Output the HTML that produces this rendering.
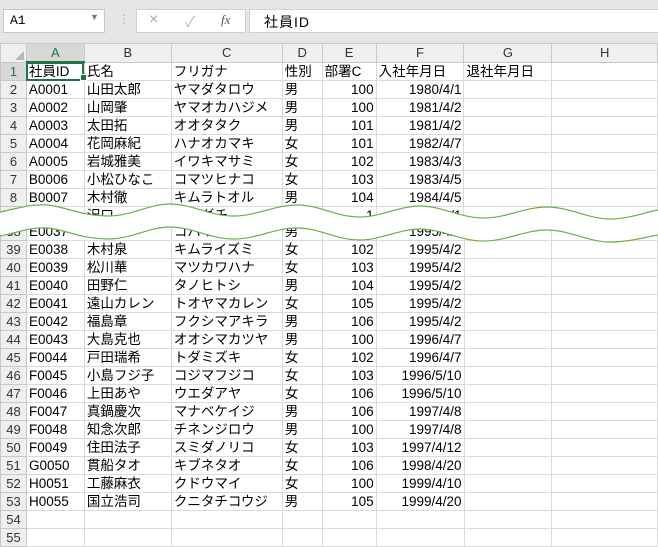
<html><head><style>
body{margin:0;width:658px;height:547px;overflow:hidden;background:#fff;position:relative;font-family:"Liberation Sans","Noto Sans CJK JP",sans-serif;}
.tb{position:absolute;left:0;top:0;width:658px;height:44px;background:#e6e6e6;}
.box{position:absolute;background:#fff;border:1px solid #c6c6c6;}
table{position:absolute;left:0;border-collapse:collapse;table-layout:fixed;font-size:13.5px;}
td{height:17px;padding:0 2px;border:1px solid #dadada;white-space:nowrap;overflow:hidden;line-height:17px;color:#000;}
td.h{background:#efefef;color:#333;text-align:center;border-color:#c8c8c8;font-size:13px;}
td.r{text-align:right;}
</style></head><body>
<div class="tb">
<div class="box" style="left:3px;top:9px;width:100px;height:22px"><span style="position:absolute;left:6px;top:3px;font-size:13px;font-family:'Liberation Mono',monospace">A1</span><span style="position:absolute;left:86px;top:2px;font-size:9px;color:#777">▼</span></div>
<span style="position:absolute;left:118px;top:12px;color:#aaa;font-size:12px">⋮</span>
<div class="box" style="left:136px;top:9px;width:108px;height:22px;border-color:#d0d0d0"><span style="position:absolute;left:12px;top:1px;color:#aaa;font-size:16px">×</span><span style="position:absolute;left:48px;top:1px;color:#bbb;font-size:15px">✓</span><span style="position:absolute;left:84px;top:2px;color:#555;font-size:13px;font-style:italic;font-family:'Liberation Serif',serif">fx</span></div>
<div class="box" style="left:249px;top:9px;width:420px;height:22px;border-color:#d0d0d0"><span style="position:absolute;left:14px;top:2px;font-size:14px;letter-spacing:1px">社員ID</span></div>
</div>
<table style="top:43px"><colgroup><col width="26"><col width="58"><col width="87"><col width="111"><col width="40"><col width="54"><col width="88"><col width="88"><col width="106"></colgroup>
<tr><td class="h" style="position:relative"><span style="position:absolute;right:2px;bottom:2px;width:0;height:0;border-left:9px solid transparent;border-bottom:9px solid #b8b8b8"></span></td><td class="h" style="background:#d8d8d8;color:#217346;border-bottom:2px solid #217346">A</td><td class="h">B</td><td class="h">C</td><td class="h">D</td><td class="h">E</td><td class="h">F</td><td class="h">G</td><td class="h">H</td></tr>
<tr><td class="h" style="background:#d8d8d8;color:#217346">1</td><td style="outline:2px solid #217346;outline-offset:-2px">社員ID</td><td>氏名</td><td>フリガナ</td><td>性別</td><td>部署C</td><td>入社年月日</td><td>退社年月日</td><td></td></tr>
<tr><td class="h">2</td><td>A0001</td><td>山田太郎</td><td>ヤマダタロウ</td><td>男</td><td class="r">100</td><td class="r">1980/4/1</td><td></td><td></td></tr>
<tr><td class="h">3</td><td>A0002</td><td>山岡肇</td><td>ヤマオカハジメ</td><td>男</td><td class="r">100</td><td class="r">1981/4/2</td><td></td><td></td></tr>
<tr><td class="h">4</td><td>A0003</td><td>太田拓</td><td>オオタタク</td><td>男</td><td class="r">101</td><td class="r">1981/4/2</td><td></td><td></td></tr>
<tr><td class="h">5</td><td>A0004</td><td>花岡麻紀</td><td>ハナオカマキ</td><td>女</td><td class="r">101</td><td class="r">1982/4/7</td><td></td><td></td></tr>
<tr><td class="h">6</td><td>A0005</td><td>岩城雅美</td><td>イワキマサミ</td><td>女</td><td class="r">102</td><td class="r">1983/4/3</td><td></td><td></td></tr>
<tr><td class="h">7</td><td>B0006</td><td>小松ひなこ</td><td>コマツヒナコ</td><td>女</td><td class="r">103</td><td class="r">1983/4/5</td><td></td><td></td></tr>
<tr><td class="h">8</td><td>B0007</td><td>木村徹</td><td>キムラトオル</td><td>男</td><td class="r">104</td><td class="r">1984/4/5</td><td></td><td></td></tr>
<tr><td class="h">9</td><td>B0008</td><td>沢口</td><td>サワグチ</td><td>男</td><td class="r">1</td><td class="r">1984/4/1</td><td></td><td></td></tr>
</table>
<table style="top:222px"><colgroup><col width="26"><col width="58"><col width="87"><col width="111"><col width="40"><col width="54"><col width="88"><col width="88"><col width="106"></colgroup>
<tr><td class="h">38</td><td>E0037</td><td>小林一</td><td>コバヤシ</td><td>男</td><td class="r">1</td><td class="r">1995/4/1</td><td></td><td></td></tr>
<tr><td class="h">39</td><td>E0038</td><td>木村泉</td><td>キムライズミ</td><td>女</td><td class="r">102</td><td class="r">1995/4/2</td><td></td><td></td></tr>
<tr><td class="h">40</td><td>E0039</td><td>松川華</td><td>マツカワハナ</td><td>女</td><td class="r">103</td><td class="r">1995/4/2</td><td></td><td></td></tr>
<tr><td class="h">41</td><td>E0040</td><td>田野仁</td><td>タノヒトシ</td><td>男</td><td class="r">104</td><td class="r">1995/4/2</td><td></td><td></td></tr>
<tr><td class="h">42</td><td>E0041</td><td>遠山カレン</td><td>トオヤマカレン</td><td>女</td><td class="r">105</td><td class="r">1995/4/2</td><td></td><td></td></tr>
<tr><td class="h">43</td><td>E0042</td><td>福島章</td><td>フクシマアキラ</td><td>男</td><td class="r">106</td><td class="r">1995/4/2</td><td></td><td></td></tr>
<tr><td class="h">44</td><td>E0043</td><td>大島克也</td><td>オオシマカツヤ</td><td>男</td><td class="r">100</td><td class="r">1996/4/7</td><td></td><td></td></tr>
<tr><td class="h">45</td><td>F0044</td><td>戸田瑞希</td><td>トダミズキ</td><td>女</td><td class="r">102</td><td class="r">1996/4/7</td><td></td><td></td></tr>
<tr><td class="h">46</td><td>F0045</td><td>小島フジ子</td><td>コジマフジコ</td><td>女</td><td class="r">103</td><td class="r">1996/5/10</td><td></td><td></td></tr>
<tr><td class="h">47</td><td>F0046</td><td>上田あや</td><td>ウエダアヤ</td><td>女</td><td class="r">106</td><td class="r">1996/5/10</td><td></td><td></td></tr>
<tr><td class="h">48</td><td>F0047</td><td>真鍋慶次</td><td>マナベケイジ</td><td>男</td><td class="r">106</td><td class="r">1997/4/8</td><td></td><td></td></tr>
<tr><td class="h">49</td><td>F0048</td><td>知念次郎</td><td>チネンジロウ</td><td>男</td><td class="r">100</td><td class="r">1997/4/8</td><td></td><td></td></tr>
<tr><td class="h">50</td><td>F0049</td><td>住田法子</td><td>スミダノリコ</td><td>女</td><td class="r">103</td><td class="r">1997/4/12</td><td></td><td></td></tr>
<tr><td class="h">51</td><td>G0050</td><td>貫船タオ</td><td>キブネタオ</td><td>女</td><td class="r">106</td><td class="r">1998/4/20</td><td></td><td></td></tr>
<tr><td class="h">52</td><td>H0051</td><td>工藤麻衣</td><td>クドウマイ</td><td>女</td><td class="r">100</td><td class="r">1999/4/10</td><td></td><td></td></tr>
<tr><td class="h">53</td><td>H0055</td><td>国立浩司</td><td>クニタチコウジ</td><td>男</td><td class="r">105</td><td class="r">1999/4/20</td><td></td><td></td></tr>
<tr><td class="h">54</td><td></td><td></td><td></td><td></td><td></td><td></td><td></td><td></td></tr>
<tr><td class="h">55</td><td></td><td></td><td></td><td></td><td></td><td></td><td></td><td></td></tr>
</table>
<div style="position:absolute;left:80px;top:74px;width:5px;height:5px;background:#217346;border:1px solid #fff"></div>
<svg style="position:absolute;left:0;top:195px" width="658" height="60" viewBox="0 195 658 60">
<path d="M0 212 C20 208 30 204 47 205 C64 206 80 216 109 216 C130 216 150 204 170 204 C192 204 210 216 234 216 C256 216 275 205 297 205 C320 205 336 217 360 217 C380 217 400 206 420 206 C442 206 460 218 484 218 C506 218 525 207 547 207 C570 207 588 219 610 219 C630 219 645 212 658 210 L658 235 C645 237 630 242 610 242 C588 242 570 230 547 230 C525 230 506 241 484 241 C460 241 442 229 420 229 C400 229 380 240 360 240 C336 240 320 228 297 228 C275 228 256 239 234 239 C210 239 192 227 170 227 C150 227 130 239 109 239 C80 239 64 229 47 228 C30 227 20 232 0 236 Z" fill="#fff"/>
<path d="M0 212 C20 208 30 204 47 205 C64 206 80 216 109 216 C130 216 150 204 170 204 C192 204 210 216 234 216 C256 216 275 205 297 205 C320 205 336 217 360 217 C380 217 400 206 420 206 C442 206 460 218 484 218 C506 218 525 207 547 207 C570 207 588 219 610 219 C630 219 645 212 658 210" fill="none" stroke="#70ad47" stroke-width="1.2"/>
<path d="M0 236 C20 232 30 227 47 228 C64 229 80 239 109 239 C130 239 150 227 170 227 C192 227 210 239 234 239 C256 239 275 228 297 228 C320 228 336 240 360 240 C380 240 400 229 420 229 C442 229 460 241 484 241 C506 241 525 230 547 230 C570 230 588 242 610 242 C630 242 645 237 658 235" fill="none" stroke="#70ad47" stroke-width="1.2"/>
</svg>
</body></html>
